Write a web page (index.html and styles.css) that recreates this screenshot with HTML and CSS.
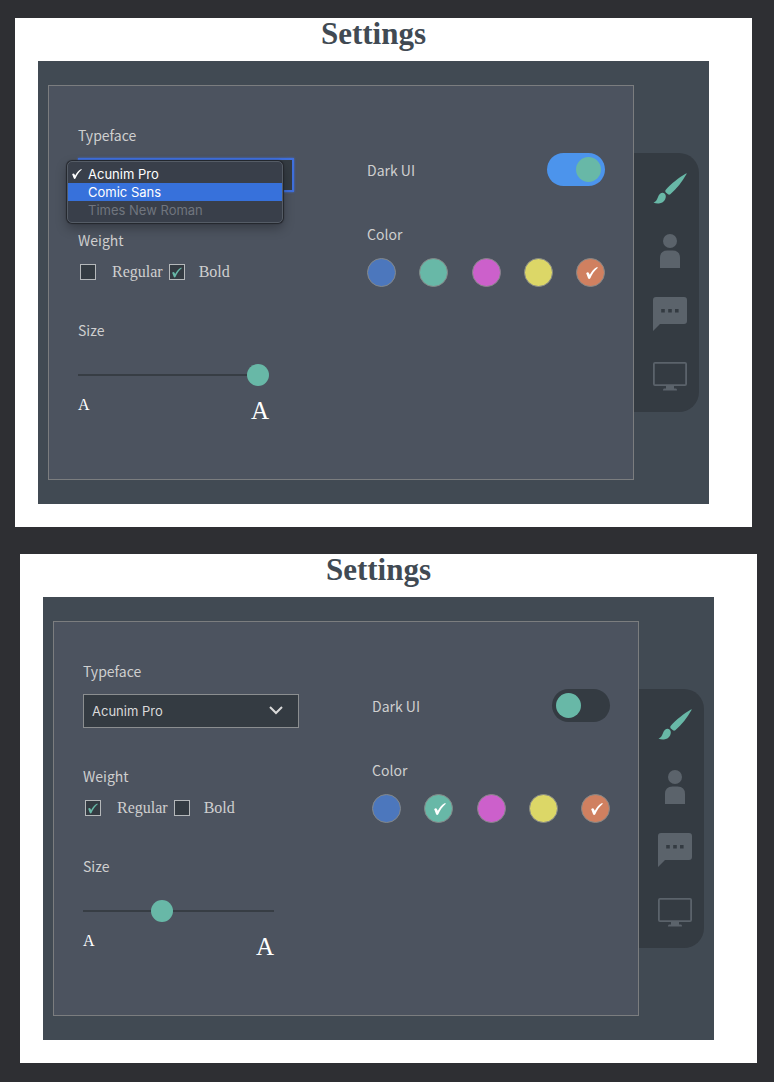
FILE: index.html
```html
<!DOCTYPE html>
<html lang="en">
<head>
<meta charset="utf-8">
<meta name="viewport" content="width=device-width, initial-scale=1">
<title>Settings</title>
<link rel="stylesheet" href="styles.css">
</head>
<body>
<svg class="sprite" aria-hidden="true">
  <symbol id="tick" viewBox="0 0 12 12"><path d="M.2 6.300C1 5.100 2.500 5 3 6.200L3.800 7.800C5.500 4.600 8 1.600 10.600.3C11.600-.1 12.200.5 11.600 1C8.400 3.800 6.200 7 4.300 11.200C3.700 12.300 2.500 12.200 2.100 11.200Z"/></symbol>
  <symbol id="brush" viewBox="0 0 34 34"><path d="M33.400 2.200C33.800 2.400 33.600 3 33.200 3.600C29.300 10.600 23.800 18 17.300 23.200C16.500 23.800 15.700 23.800 15 23.300L12.600 21.200C12.100 20.500 12.200 19.600 12.800 18.800C18 12.800 25.800 6.500 33.400 2.200Z"/><path d="M9.800 21.800C12 22.300 13 23.800 12.800 26C12.400 29.200 10.500 31.700 7 32.300C4.600 32.700 2.500 32.500.5 31.600C2.900 30.800 3.800 29 4.800 26.500C5.800 23.800 7.400 21.800 9.800 21.800Z"/></symbol>
  <symbol id="person" viewBox="0 0 34 34"><circle cx="17" cy="7" r="7"/><path d="M7 34V24Q7 16.500 14.500 16.500H19.500Q27 16.500 27 24V34Z"/></symbol>
  <symbol id="chat" viewBox="0 0 34 34"><path fill-rule="evenodd" d="M3 0H31Q34 0 34 3V24Q34 27 31 27H7L0 34V3Q0 0 3 0ZM8.200 12V15.600H11.800V12ZM15.200 12V15.600H18.800V12ZM22 12V15.600H25.600V12Z"/></symbol>
  <symbol id="monitor" viewBox="0 0 34 34"><path fill-rule="evenodd" d="M2 2H32Q34 2 34 4V24Q34 26 32 26H21V28.500H23Q24 28.500 24 30.500H10Q10 28.500 11 28.500H13V26H2Q0 26 0 24V4Q0 2 2 2ZM1.800 3.800V24.200H32.200V3.800Z"/></symbol>
</svg>

<section class="window">
  <h1 class="title">Settings</h1>
  <div class="frame">
    <form class="panel">
      <div class="column">
        <label class="label" for="typeface-a">Typeface</label>
        <div class="select-box">
          <select class="select select--open" id="typeface-a">
            <option>Acunim Pro</option>
            <option>Comic Sans</option>
            <option disabled>Times New Roman</option>
          </select>
          <div class="menu" role="listbox" aria-label="Typeface">
            <button class="menu-item" type="button" role="option" aria-selected="true"><svg class="menu-tick"><use href="#tick"/></svg>Acunim Pro</button>
            <button class="menu-item menu-item--active" type="button" role="option">Comic Sans</button>
            <button class="menu-item" type="button" role="option" disabled>Times New Roman</button>
          </div>
        </div>
        <div class="label">Weight</div>
        <div class="weights">
          <label class="choice"><span class="box"><input class="check" type="checkbox"><svg class="check-tick"><use href="#tick"/></svg></span>Regular</label>
          <label class="choice"><span class="box"><input class="check" type="checkbox" checked><svg class="check-tick"><use href="#tick"/></svg></span>Bold</label>
        </div>
        <label class="label" for="size-a">Size</label>
        <input class="slider" id="size-a" type="range" min="0" max="100" value="100">
        <div class="scale"><span>A</span><span class="scale-large">A</span></div>
      </div>
      <div class="column column--right">
        <div class="toggle-row">
          <label class="label" for="dark-a">Dark UI</label>
          <input class="toggle" id="dark-a" type="checkbox" role="switch" checked>
        </div>
        <div class="label">Color</div>
        <div class="swatches">
          <label class="swatch"><input class="dot dot--blue" type="checkbox" aria-label="Blue"><svg class="dot-tick"><use href="#tick"/></svg></label>
          <label class="swatch"><input class="dot dot--green" type="checkbox" aria-label="Green"><svg class="dot-tick"><use href="#tick"/></svg></label>
          <label class="swatch"><input class="dot dot--pink" type="checkbox" aria-label="Pink"><svg class="dot-tick"><use href="#tick"/></svg></label>
          <label class="swatch"><input class="dot dot--yellow" type="checkbox" aria-label="Yellow"><svg class="dot-tick"><use href="#tick"/></svg></label>
          <label class="swatch"><input class="dot dot--orange" type="checkbox" aria-label="Orange" checked><svg class="dot-tick"><use href="#tick"/></svg></label>
        </div>
      </div>
    </form>
    <nav class="tabs" aria-label="Sections">
      <button class="tab tab--active" type="button" aria-label="Appearance"><svg><use href="#brush"/></svg></button>
      <button class="tab" type="button" aria-label="Profile"><svg><use href="#person"/></svg></button>
      <button class="tab" type="button" aria-label="Messages"><svg><use href="#chat"/></svg></button>
      <button class="tab" type="button" aria-label="Display"><svg><use href="#monitor"/></svg></button>
    </nav>
  </div>
</section>

<section class="window window--second">
  <h1 class="title">Settings</h1>
  <div class="frame">
    <form class="panel">
      <div class="column">
        <label class="label" for="typeface-b">Typeface</label>
        <div class="select-box">
          <select class="select" id="typeface-b">
            <option>Acunim Pro</option>
            <option>Comic Sans</option>
            <option disabled>Times New Roman</option>
          </select>
          <svg class="chevron" viewBox="0 0 14 9"><path d="M1 1L7 7L13 1"/></svg>
        </div>
        <div class="label">Weight</div>
        <div class="weights">
          <label class="choice"><span class="box"><input class="check" type="checkbox" checked><svg class="check-tick"><use href="#tick"/></svg></span>Regular</label>
          <label class="choice"><span class="box"><input class="check" type="checkbox"><svg class="check-tick"><use href="#tick"/></svg></span>Bold</label>
        </div>
        <label class="label" for="size-b">Size</label>
        <input class="slider" id="size-b" type="range" min="0" max="100" value="40">
        <div class="scale"><span>A</span><span class="scale-large">A</span></div>
      </div>
      <div class="column column--right">
        <div class="toggle-row">
          <label class="label" for="dark-b">Dark UI</label>
          <input class="toggle" id="dark-b" type="checkbox" role="switch">
        </div>
        <div class="label">Color</div>
        <div class="swatches">
          <label class="swatch"><input class="dot dot--blue" type="checkbox" aria-label="Blue"><svg class="dot-tick"><use href="#tick"/></svg></label>
          <label class="swatch"><input class="dot dot--green" type="checkbox" aria-label="Green" checked><svg class="dot-tick"><use href="#tick"/></svg></label>
          <label class="swatch"><input class="dot dot--pink" type="checkbox" aria-label="Pink"><svg class="dot-tick"><use href="#tick"/></svg></label>
          <label class="swatch"><input class="dot dot--yellow" type="checkbox" aria-label="Yellow"><svg class="dot-tick"><use href="#tick"/></svg></label>
          <label class="swatch"><input class="dot dot--orange" type="checkbox" aria-label="Orange" checked><svg class="dot-tick"><use href="#tick"/></svg></label>
        </div>
      </div>
    </form>
    <nav class="tabs" aria-label="Sections">
      <button class="tab tab--active" type="button" aria-label="Appearance"><svg><use href="#brush"/></svg></button>
      <button class="tab" type="button" aria-label="Profile"><svg><use href="#person"/></svg></button>
      <button class="tab" type="button" aria-label="Messages"><svg><use href="#chat"/></svg></button>
      <button class="tab" type="button" aria-label="Display"><svg><use href="#monitor"/></svg></button>
    </nav>
  </div>
</section>
</body>
</html>
```
FILE: styles.css
```css
* { box-sizing: border-box; }

body {
  margin: 0;
  padding: 18px 22px 18px 15px;
  display: flex;
  flex-direction: column;
  gap: 27px;
  background: #2e2f33;
  color: #cfcfcf;
  font-family: "Liberation Serif", serif;
  font-size: 16px;
}

.sprite { position: absolute; width: 0; height: 0; }

.window { padding: 0 43px 23px 23px; background: #fff; }
.window--second { margin: 0 -5px 0 5px; }

.title {
  margin: 0;
  padding-bottom: 11px;
  color: #414a53;
  font-size: 31px;
  line-height: 32px;
  text-align: center;
}

.frame {
  display: grid;
  grid-template-columns: 1fr 65px;
  align-items: start;
  padding: 24px 10px;
  background: #414a53;
}

.panel {
  display: grid;
  grid-template-columns: 216fr 238fr;
  column-gap: 73px;
  padding: 37px 28px 54px 29px;
  border: 1px solid #7b7d7f;
  background: #4c535f;
}

.label {
  display: block;
  font-family: "Noto Sans CJK SC", sans-serif;
  font-size: 14px;
  line-height: 24px;
}

.select-box {
  position: relative;
  display: grid;
  align-items: center;
  margin: 11px 0 36px;
}

.select {
  grid-area: 1 / 1;
  appearance: none;
  width: 100%;
  height: 34px;
  padding: 0 8px;
  border: 1px solid #8b8e90;
  border-radius: 0;
  background: #343b42;
  color: #dadada;
  font-family: Inter, sans-serif;
  font-size: 13px;
}

.select--open {
  border: 2px solid #3f6fdc;
  box-shadow: 0 0 2px #3f6fdc;
  color: transparent;
}

.chevron {
  grid-area: 1 / 1;
  justify-self: end;
  width: 14px;
  height: 9px;
  margin: 0 16px 2px 0;
  fill: none;
  stroke: #dadada;
  stroke-width: 2;
  pointer-events: none;
}

/* Opened list, drawn over the field it belongs to */
.menu {
  position: absolute;
  top: 3px;
  left: -11px;
  width: 100%;
  padding: 3px 0;
  border: 1px solid #555c66;
  border-radius: 5px;
  background: #393f4a;
  box-shadow: 0 0 1px 1px #23262c, 0 5px 12px rgba(0, 0, 0, .3);
}

.menu-item {
  position: relative;
  display: block;
  width: 100%;
  padding: 0 0 0 20px;
  border: 0;
  background: none;
  color: #fff;
  font-family: Inter, sans-serif;
  font-size: 13px;
  line-height: 18px;
  text-align: left;
}
.menu-item--active { background: #3771db; }
.menu-item:disabled { color: #70757e; }

.menu-tick {
  position: absolute;
  top: 4px;
  left: 4px;
  width: 10px;
  height: 10px;
  fill: #fff;
}

.weights {
  display: flex;
  gap: 6px;
  padding-left: 2px;
  margin: 10px 0 36px;
  line-height: 20px;
}
.choice { display: flex; align-items: center; gap: 16px; }
.choice + .choice { gap: 14px; }
.box { display: grid; place-items: center; }
.box > *, .swatch > * { grid-area: 1 / 1; }

.check {
  appearance: none;
  width: 16px;
  height: 16px;
  margin: 0;
  border: 1px solid #b5b8ba;
  background: #343b42;
}
.check-tick, .dot-tick { visibility: hidden; pointer-events: none; }
.check-tick { width: 10px; height: 11px; fill: #68b8a7; z-index: 1; }
.check:checked + .check-tick, .dot:checked + .dot-tick { visibility: visible; }

.slider {
  appearance: none;
  display: block;
  width: 191px;
  max-width: 100%;
  height: 22px;
  margin: 22px 0 11px;
  background: none;
}
.slider::-webkit-slider-runnable-track {
  height: 2px;
  background: #373d44;
}
.slider::-webkit-slider-thumb {
  appearance: none;
  width: 22px;
  height: 22px;
  margin-top: -10px;
  border-radius: 50%;
  background: #68b8a7;
}

.scale {
  display: flex;
  justify-content: space-between;
  width: 191px;
  max-width: 100%;
  color: #fff;
  line-height: 16px;
}
.scale-large { font-size: 25px; line-height: 28px; }

.column--right { padding-top: 30px; }

.toggle-row {
  display: flex;
  justify-content: space-between;
  align-items: center;
  margin-bottom: 36px;
}

.toggle {
  appearance: none;
  display: flex;
  width: 58px;
  height: 33px;
  margin: 0;
  padding: 4px;
  border-radius: 17px;
  background: #343b42;
}
.toggle::before {
  content: "";
  width: 25px;
  height: 25px;
  border-radius: 50%;
  background: #68b8a7;
}
.toggle:checked { justify-content: flex-end; background: #4c94ec; }

.swatches { display: flex; justify-content: space-between; margin-top: 12px; }
.swatch { display: grid; place-items: center; }
.dot {
  appearance: none;
  width: 29px;
  height: 29px;
  margin: 0;
  border: 1px solid #858888;
  border-radius: 50%;
}
.dot--blue { background: #4c77bd; }
.dot--green { background: #68b8a7; }
.dot--pink { background: #cc60cb; }
.dot--yellow { background: #dcd767; }
.dot--orange { background: #d08060; }
.dot-tick { width: 12px; height: 12px; margin-left: 3px; fill: #fff; z-index: 1; }

.tabs {
  display: flex;
  flex-direction: column;
  gap: 29px;
  margin-top: 68px;
  padding: 18px 12px 18px 19px;
  border-radius: 0 20px 20px 0;
  background: #343b42;
}
.tab {
  height: 34px;
  padding: 0;
  border: 0;
  background: none;
}
.tab svg { display: block; width: 34px; height: 34px; fill: #5b636b; }
.tab--active svg { fill: #68b8a7; }
```
